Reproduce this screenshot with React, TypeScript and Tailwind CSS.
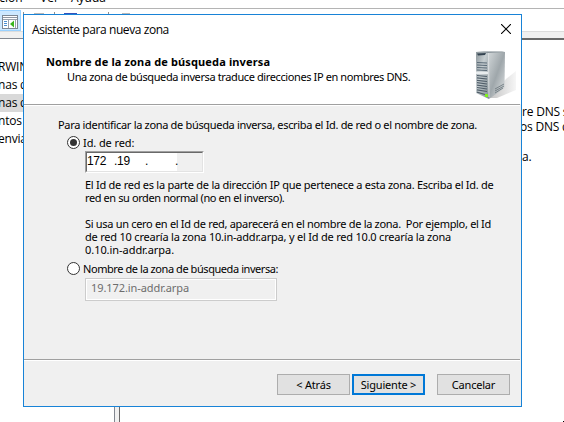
const sans = "font-['Noto_Sans','DejaVu_Sans',sans-serif]";
const segoe = "font-['Open_Sans','Noto_Sans',sans-serif]";

function Rule() {
  return <div className="mr-px h-[2px] shrink-0 border-t border-[#a0a0a0] bg-white" />;
}

function Server() {
  return (
    <svg width="44" height="50" viewBox="0 0 44 50">
      <defs>
        <linearGradient id="front" x1="0" y1="0" x2="1" y2="1">
          <stop offset="0" stopColor="#8d979c" />
          <stop offset=".4" stopColor="#c6ced1" />
          <stop offset="1" stopColor="#7f8b91" />
        </linearGradient>
        <linearGradient id="side" x1="0" y1="0" x2="1" y2="1">
          <stop offset="0" stopColor="#d3d8da" />
          <stop offset=".5" stopColor="#9fa7ab" />
          <stop offset="1" stopColor="#e2e5e6" />
        </linearGradient>
        <linearGradient id="shade" x1="0" y1="0" x2="1" y2="0">
          <stop offset="0" stopColor="#c4c4c4" />
          <stop offset="1" stopColor="#f6f6f6" />
        </linearGradient>
      </defs>
      <path d="M15 48 L31 29 L41 21 L41 40 L22 48 Z" fill="url(#shade)" />
      <path d="M1 2 L13 1.5 L14 49 L1 43 Z" fill="url(#front)" />
      <path d="M13 1.5 L30 2 L29.5 38 L14 49 Z" fill="url(#side)" />
      <path d="M1 2 L9 1.5 H27 L30 2 L13 3 Z" fill="#89949a" />
      <path d="M2 3.5 L11 3 L10 5 L3 5.5 Z" fill="#334350" />
      <path d="M2 12.5 L12 13 M2 15 L12 15.5 M2 17.5 L12 18 M2 20 L12 20.5" stroke="#5b6b78" strokeWidth="1.2" />
      <path d="M1 22.7 L13 23" stroke="#e8ecee" strokeWidth="2.5" />
      <path
        d="M2 25.5 L12 26.5 M2 27.9 L12 29 M2 30.3 L12 31.5 M2 32.7 L12 34 M2 35.1 L12 36.5 M2 37.5 L12 39 M2 39.9 L12 41.5 M2 42.2 L10 44.5"
        stroke="#505e6a"
        strokeWidth="1.2"
      />
      <path d="M13.5 3 L14 47" stroke="#dde1e3" strokeWidth=".8" />
      <path d="M20 39 L29 34 M20 41 L29 36 M20 43 L28 38" stroke="#667177" strokeWidth=".8" />
      <rect x="10" y="44" width="3" height="3" fill="#7ef01d" />
    </svg>
  );
}

function Radio({ checked = false }: { checked?: boolean }) {
  return (
    <span className="flex size-[13px] shrink-0 items-center justify-center rounded-full border border-[#333] bg-white">
      {checked && <span className="size-[7px] rounded-full bg-[#333]" />}
    </span>
  );
}

const button = "flex h-[21px] w-[73px] items-center justify-center bg-[#e1e1e1] pb-px";

function Dialog() {
  return (
    <div
      className={`absolute left-[23px] top-[14px] flex h-[393px] w-[499px] flex-col border border-[#1883d7] bg-[#f0f0f0] text-[11px] leading-[13px] whitespace-pre text-black ${sans}`}
    >
      <div className="flex h-[89px] shrink-0 justify-between bg-white">
        <div className="flex flex-col pl-2">
          <div className={`pt-[7px] text-[12px] leading-4 tracking-[-0.42px] ${segoe}`}>Asistente para nueva zona</div>
          <div className="mt-[17px] pl-[14px] leading-[14px] font-bold tracking-[0.14px]">Nombre de la zona de búsqueda inversa</div>
          <div className="mt-px pl-[35px] leading-[14px] tracking-[-0.39px]">Una zona de búsqueda inversa traduce direcciones IP en nombres DNS.</div>
        </div>
        <div className="flex flex-col items-end pr-0.5">
          <svg className="mt-[9px] mr-[8px]" width="10" height="10" viewBox="0 0 10 10">
            <path d="M0 0L10 10M10 0L0 10" stroke="#000" strokeWidth="1.1" />
          </svg>
          <div className="mt-[16px]">
            <Server />
          </div>
        </div>
      </div>
      <Rule />
      <div className="flex h-[253px] shrink-0 flex-col pl-[34px]">
        <div className="mt-[12px] tracking-[-0.32px]">Para identificar la zona de búsqueda inversa, escriba el Id. de red o el nombre de zona.</div>
        <div className="mt-[5px] flex items-center pl-[9px]">
          <Radio checked />
          <span className="pl-[3px] tracking-[-0.1px]">Id. de red:</span>
        </div>
        <div className="mt-[2px] ml-[27px] flex h-[22px] w-[119px] border border-t-[#a0a0a0] border-r-white border-b-white border-l-[#a0a0a0]">
          <div className="flex flex-1 border border-t-[#696969] border-r-[#e3e3e3] border-b-[#e3e3e3] border-l-[#696969]">
            <div className="grid h-full w-[90px] grid-cols-[27px_31px_30px_2px] bg-white pt-px font-['Liberation_Sans',sans-serif] text-[12px] leading-[14px] tracking-[-0.3px]">
              <span>172</span>
              <span>.19</span>
              <span>.</span>
              <span>.</span>
            </div>
          </div>
        </div>
        <div className="mt-[5px] pl-[27px]">
          <div className="tracking-[-0.26px]">El Id de red es la parte de la dirección IP que pertenece a esta zona. Escriba el Id. de</div>
          <div className="tracking-[-0.4px]">red en su orden normal (no en el inverso).</div>
          <div className="mt-[13px] tracking-[-0.31px]">Si usa un cero en el Id de red, aparecerá en el nombre de la zona.  Por ejemplo, el Id</div>
          <div className="tracking-[-0.21px]">de red 10 crearía la zona 10.in-addr.arpa, y el Id de red 10.0 crearía la zona</div>
          <div className="tracking-[-0.05px]">0.10.in-addr.arpa.</div>
        </div>
        <div className="mt-[6px] flex items-center pl-[9px]">
          <Radio />
          <span className="pl-[3px] tracking-[-0.43px]">Nombre de la zona de búsqueda inversa:</span>
        </div>
        <div className="mt-[3px] ml-[27px] h-[23px] w-[192px] border border-[#ccc]">
          <div className="h-full border border-white pt-px pl-[4px] tracking-[-0.08px] text-[#6d6d6d]">19.172.in-addr.arpa</div>
        </div>
      </div>
      <Rule />
      <div className="flex pt-[13px] pl-[253px] tracking-[-0.2px]">
        <div className={`${button} border border-[#adadad]`}>&lt; Atrás</div>
        <div className={`${button} ml-[2px] border-2 border-[#0078d7]`}>Siguiente &gt;</div>
        <div className={`${button} ml-[12px] border border-[#adadad]`}>Cancelar</div>
      </div>
    </div>
  );
}

export default function App() {
  return (
    <div className={`relative flex h-[422px] w-[564px] flex-col overflow-hidden bg-white text-[12px] whitespace-pre text-black ${segoe}`}>
      <div className="flex h-[8px] shrink-0 overflow-hidden">
        <div className="mt-[-10px] flex leading-4">
          <span className="-ml-[14px] w-[54px]">Acción</span>
          <span className="w-[31px]">Ver</span>
          <span>Ayuda</span>
        </div>
      </div>
      <div className="flex h-[23px] shrink-0 border-t border-[#b4b4b4]">
        <div className="mt-px h-[21px] w-[21px] border border-l-0 border-[#99d1ff] bg-[#cce8ff]">
          <svg className="mt-[4px] ml-[2px]" width="16" height="14" viewBox="0 0 16 14">
            <rect x=".5" y=".5" width="15" height="13" fill="#fff" stroke="#7d8793" />
            <path d="M1 2.5H15" stroke="#8f98a3" />
            <path d="M12 1.5H14" stroke="#fff" />
            <path d="M1 4.5H15M6.5 4V13M13.5 5V13" stroke="#9aa2ac" />
            <path d="M2 6.5H5M2 8.5H5M2 10.5H5" stroke="#4b8fd0" />
            <path d="M8 9L12 5.5V12.5Z" fill="#3ab51e" />
          </svg>
        </div>
        <div className="mt-[3px] ml-[2px] h-5 w-px bg-[#8d8d8d]" />
        <div className="mt-[4px] ml-[10px] h-2 w-[10px] bg-[#b8b8b8]" />
        <div className="mt-[3px] ml-[10px] h-5 w-px bg-[#8d8d8d]" />
        <div className="mt-[4px] ml-[9px] h-2 w-[13px] bg-[#3352bc]" />
        <div className="mt-[3px] ml-[31px] h-5 w-px bg-[#8d8d8d]" />
        <div className="mt-[4px] ml-[13px] h-2 w-[8px] bg-[#b8b8b8]" />
      </div>
      <div className="h-[7px] shrink-0 border-t border-[#dcdcdc] bg-[#f0f0f0]" />
      <div className="flex min-h-0 flex-1">
        <div className="w-[115px] shrink-0 overflow-hidden border-t border-r border-[#828790] pt-[19px] leading-[18px] tracking-[-0.2px]">
          <div className="-ml-[2px]">RWIN-</div>
          <div className="-ml-[2px]">nas de</div>
          <div className="bg-[#d9d9d9]">
            <div className="-ml-[2px]">nas de</div>
          </div>
          <div className="-ml-[2px]">ntos g</div>
          <div className="-ml-[2px]">enviado</div>
        </div>
        <div className="w-[4px] shrink-0 bg-[#f0f0f0]" />
        <div className="min-w-0 flex-1 overflow-hidden border-t-2 border-l border-[#696969]">
          <div className="mt-[64px] ml-[402px] leading-[15px] tracking-[-0.2px]">
            <div>re DNS se</div>
            <div className="-ml-[2px]">os DNS de</div>
            <div className="mt-[15px]">a.</div>
          </div>
        </div>
      </div>
      <div className="absolute right-0 bottom-0 size-px bg-black" />
      <Dialog />
    </div>
  );
}
